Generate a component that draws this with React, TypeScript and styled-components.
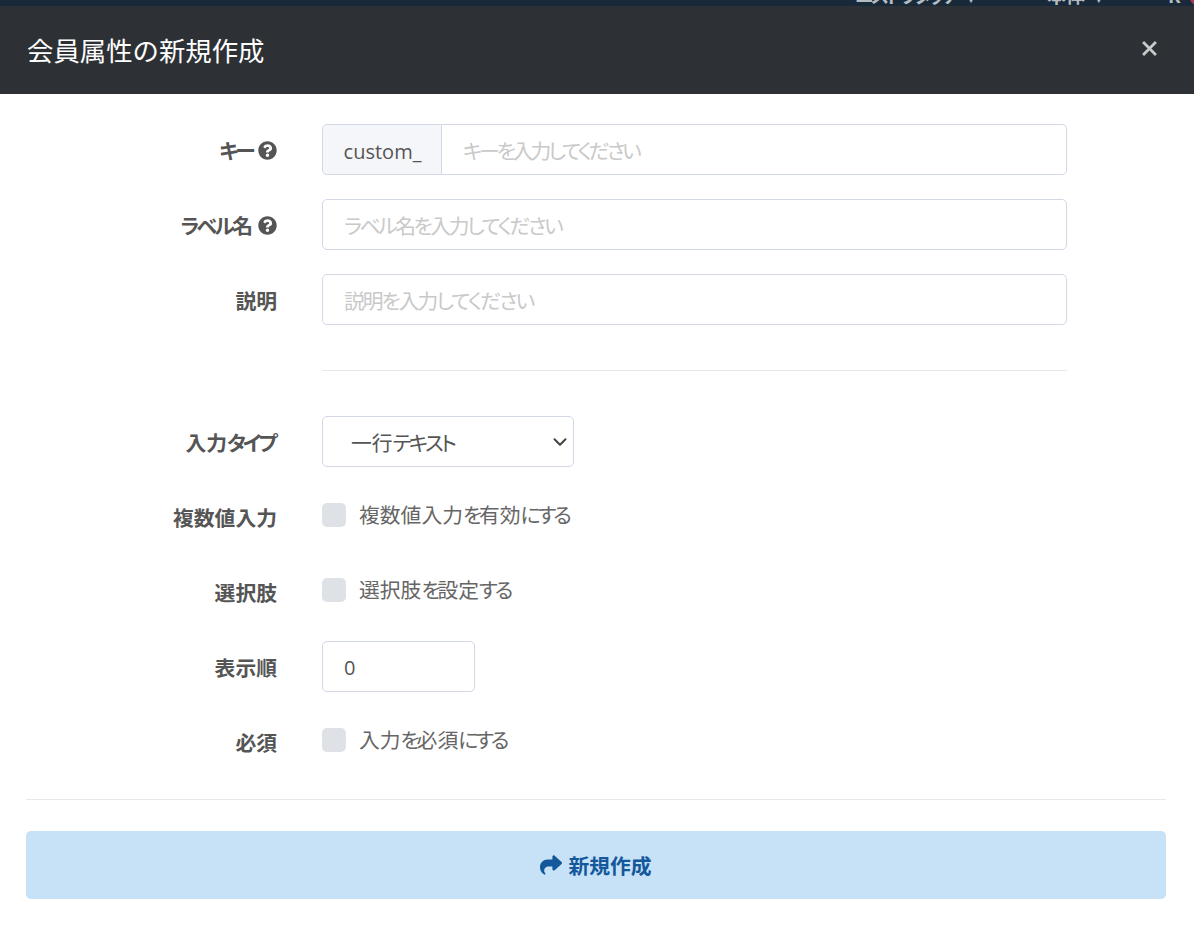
import React from "react";
import styled, { createGlobalStyle } from "styled-components";
import { FaShare } from "react-icons/fa6";
import { FaQuestionCircle } from "react-icons/fa";
import { ChevronDown } from "lucide-react";

const Global = createGlobalStyle`
  html, body { margin: 0; padding: 0; background: #fff; }
  * { box-sizing: border-box; }
  body {
    font-family: "Noto Sans CJK JP", "Open Sans", sans-serif;
    font-feature-settings: "palt";
    color: #555;
  }
`;

const Page = styled.div`
  width: 1194px;
  height: 928px;
  overflow: hidden;
  background: #fff;
`;

const TopStrip = styled.div`
  height: 6px;
  background: #182a3a;
  overflow: hidden;
  display: flex;
  padding-left: 855px;
  color: #b4bcc2;
  font-size: 19px;
  font-weight: 700;
  line-height: 20px;
`;

const StripItem = styled.span<{ $w: number }>`
  width: ${(p) => p.$w}px;
  margin-top: -15px;
  white-space: nowrap;
  flex: none;
`;

const StripBadge = styled.span`
  flex: none;
  width: 14px;
  height: 14px;
  margin-top: -9px;
  border-radius: 50%;
  background: #a33a50;
`;

const Kana = styled.span`
  letter-spacing: -2.7px;
`;

const EndKana = styled(Kana)`
  margin-right: 2.7px;
  letter-spacing: -3.2px;
`;

const Header = styled.header`
  height: 88px;
  background: #2d3135;
  display: flex;
  align-items: center;
  justify-content: space-between;
  padding: 0 37px 0 27px;
`;

const Title = styled.h1`
  margin: 0 0 2px;
  font-size: 26.4px;
  font-weight: 400;
  color: #fff;
  font-feature-settings: normal;
`;

const Close = styled.svg`
  width: 15px;
  height: 15px;
  margin-bottom: 4px;
  stroke: #c8caca;
  stroke-width: 2.6;
`;

const Body = styled.main`
  padding: 30px 28px 0 26px;
`;

const Row = styled.div<{ $mb?: number }>`
  display: grid;
  grid-template-columns: 251px 1fr;
  column-gap: 45px;
  align-items: center;
  height: 51px;
  margin-bottom: ${(p) => p.$mb ?? 24}px;
`;

const Label = styled.label`
  display: flex;
  justify-content: flex-end;
  align-items: center;
  gap: 5px;
  font-size: 20.8px;
  font-weight: 700;
  color: #555;
  white-space: nowrap;
`;

const Field = styled.div`
  width: 745px;
  display: flex;
`;

const Addon = styled.div`
  width: 120px;
  height: 51px;
  flex: none;
  background: #f5f6f9;
  border: 1px solid #d3d8e6;
  border-radius: 5px 0 0 5px;
  font-family: "Open Sans", sans-serif;
  font-size: 20px;
  color: #555;
  display: flex;
  align-items: center;
  justify-content: center;
  padding: 4px 0 0 1px;
`;

const Input = styled.input<{ $joined?: boolean; $ls?: number }>`
  flex: 1;
  min-width: 0;
  height: 51px;
  border: 1px solid #d3d8e6;
  border-left-width: ${(p) => (p.$joined ? 0 : 1)}px;
  border-radius: ${(p) => (p.$joined ? "0 5px 5px 0" : "5px")};
  padding: 1px 21px 0;
  font-family: inherit;
  font-feature-settings: "palt";
  font-size: 20.8px;
  color: #555;
  background: #fff;
  outline: none;
  &::placeholder {
    color: #c9c9c9;
    opacity: 1;
    letter-spacing: ${(p) => p.$ls ?? 0}px;
  }
`;

const Rule = styled.hr`
  margin: 0;
  border: 0;
  border-top: 1px solid #e6e8ec;
`;

const InnerRule = styled(Rule)`
  width: 745px;
  margin: 45px 0 45px 296px;
`;

const SelectBox = styled.div`
  position: relative;
  width: 252px;
  height: 51px;
  border: 1px solid #d3d8e6;
  border-radius: 5px;
  display: flex;
  align-items: center;
  padding-left: 28px;
  font-size: 20.8px;
  color: #555;
  background: #fff;
  & > svg { position: absolute; right: 2px; top: 14px; }
`;

const NumberInput = styled(Input)`
  flex: none;
  width: 153px;
  font-family: "Open Sans", sans-serif;
  font-size: 20px;
`;

const Check = styled.label`
  display: flex;
  align-items: center;
  gap: 13px;
  font-size: 20.8px;
  color: #666;
  margin-top: -5px;
  ${Kana} { letter-spacing: -3.2px; }
`;

const Box = styled.span`
  width: 24px;
  height: 24px;
  margin-top: 2px;
  background: #dee2e6;
  border-radius: 5px;
  flex: none;
`;

const Help = styled(FaQuestionCircle)`
  width: 19px;
  height: 19px;
  margin-top: 2px;
  color: #555;
`;

const Divider = styled(Rule)`
  margin-top: 32px;
  width: 1140px;
`;

const Submit = styled.button`
  margin-top: 31px;
  width: 1140px;
  height: 68px;
  display: flex;
  align-items: center;
  justify-content: center;
  gap: 6px;
  background: #c7e1f7;
  border: 0;
  border-radius: 5px;
  color: #13589b;
  font-family: inherit;
  font-feature-settings: normal;
  font-size: 20.8px;
  font-weight: 700;
`;

export default function App() {
  return (
    <Page>
      <Global />
      <TopStrip>
        <StripItem $w={192}><Kana>ニストラタッチ</Kana> ∨</StripItem>
        <StripItem $w={121}>本体 ∨</StripItem>
        <StripItem $w={22}>R</StripItem>
        <StripBadge />
      </TopStrip>
      <Header>
        <Title>会員属性の新規作成</Title>
        <Close viewBox="0 0 14 14"><path d="M1 1l12 12M13 1L1 13" /></Close>
      </Header>
      <Body>
        <Row>
          <Label><span><Kana>キー</Kana></span><Help /></Label>
          <Field>
            <Addon>custom_</Addon>
            <Input $joined $ls={-3.1} placeholder="キーを入力してください" />
          </Field>
        </Row>
        <Row>
          <Label><span><Kana>ラベル</Kana>名</span><Help /></Label>
          <Field><Input $ls={-2.45} placeholder="ラベル名を入力してください" /></Field>
        </Row>
        <Row $mb={0}>
          <Label>説明</Label>
          <Field><Input $ls={-2} placeholder="説明を入力してください" /></Field>
        </Row>
        <InnerRule />
        <Row>
          <Label><span>入力<EndKana>タイプ</EndKana></span></Label>
          <SelectBox><span>一行<Kana>テキスト</Kana></span><ChevronDown size={22} strokeWidth={2.2} color="#444" /></SelectBox>
        </Row>
        <Row>
          <Label>複数値入力</Label>
          <Check><Box /><span>複数値入力<Kana>を</Kana>有効<Kana>にする</Kana></span></Check>
        </Row>
        <Row>
          <Label>選択肢</Label>
          <Check><Box /><span>選択肢<Kana>を</Kana>設定<Kana>する</Kana></span></Check>
        </Row>
        <Row>
          <Label>表示順</Label>
          <NumberInput defaultValue="0" />
        </Row>
        <Row $mb={0}>
          <Label>必須</Label>
          <Check><Box /><span>入力<Kana>を</Kana>必須<Kana>にする</Kana></span></Check>
        </Row>
        <Divider />
        <Submit><FaShare size={22} />新規作成</Submit>
      </Body>
    </Page>
  );
}
